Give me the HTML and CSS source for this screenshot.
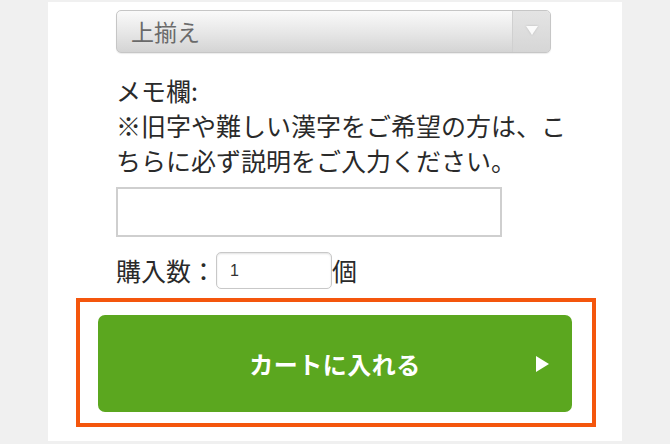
FILE: index.html
```html
<!DOCTYPE html>
<html lang="ja">
<head>
<meta charset="utf-8">
<title>カートに入れる</title>
<link rel="stylesheet" href="styles.css">
</head>
<body>
<div class="panel">
  <div class="form">
    <div class="select">
      <span class="select-text">上揃え</span>
      <span class="select-arrow">
        <svg width="12" height="9" viewBox="0 0 12 9"><polygon points="0,0 12,0 6,9" fill="#fbfbfb"/></svg>
      </span>
    </div>
    <p class="memo">メモ欄:<br>※旧字や難しい漢字をご希望の方は、こちらに必ず説明をご入力ください。</p>
    <div class="textarea"></div>
    <div class="qty">
      <span>購入数：</span><span class="qty-input">1</span><span>個</span>
    </div>
  </div>
  <div class="highlight">
    <div class="cart-btn">
      <span class="cart-label">カートに入れる</span>
      <svg class="cart-arrow" width="13" height="16" viewBox="0 0 13 16"><polygon points="0,0 13,8 0,16" fill="#ffffff"/></svg>
    </div>
  </div>
</div>
</body>
</html>
```

FILE: styles.css
```css
html, body {
  margin: 0;
  padding: 0;
}
body {
  background: #f0f0f0;
  font-family: "Noto Sans CJK JP", "Noto Sans", sans-serif;
  color: #2a2a2a;
  width: 670px;
  height: 444px;
  overflow: hidden;
}
.panel {
  margin: 2px 48px 0;
  background: #ffffff;
  height: 439px;
  padding-top: 8px;
  box-sizing: border-box;
}
.form {
  padding-left: 68px;
}
.select {
  width: 435px;
  height: 43px;
  box-sizing: border-box;
  border: 1px solid #c6c6c6;
  border-radius: 5px;
  background: linear-gradient(#fafafa, #e6e6e6 55%, #d4d4d4);
  display: flex;
  align-items: center;
  box-shadow: 0 1px 1px rgba(0,0,0,0.08);
}
.select-text {
  flex: 1;
  padding-left: 14px;
  font-size: 23px;
  color: #6a6a6a;
  line-height: 1;
}
.select-arrow {
  width: 37px;
  height: 100%;
  border-left: 1px solid #d0d0d0;
  background: linear-gradient(#e4e4e4, #d6d6d6);
  border-radius: 0 4px 4px 0;
  display: flex;
  align-items: center;
  justify-content: center;
}
.select-arrow svg {
  filter: drop-shadow(0 0 1px rgba(0,0,0,0.15));
  margin-top: -2px;
}
.memo {
  margin: 20px 0 0;
  width: 470px;
  font-size: 25px;
  line-height: 35px;
  color: #2a2a2a;
}
.textarea {
  margin-top: 9px;
  width: 386px;
  height: 50px;
  box-sizing: border-box;
  border: 2px solid #cfcfcf;
}
.qty {
  margin-top: 15px;
  display: flex;
  align-items: center;
  font-size: 25px;
  line-height: 37px;
  height: 37px;
}
.qty-input {
  width: 116px;
  height: 37px;
  box-sizing: border-box;
  border: 1px solid #c8c8c8;
  border-radius: 5px;
  box-shadow: inset 0 1px 2px rgba(0,0,0,0.12);
  font-family: "Liberation Sans", sans-serif;
  font-size: 16px;
  line-height: 35px;
  padding-left: 13px;
  color: #333;
}
.highlight {
  margin: 9px 0 0 28px;
  width: 520px;
  height: 129px;
  box-sizing: border-box;
  border: 4px solid #f4560d;
  padding: 13px 0 0 18px;
}
.cart-btn {
  width: 474px;
  height: 97px;
  background: #5ba71f;
  border-radius: 7px;
  display: flex;
  align-items: center;
  justify-content: center;
  position: relative;
}
.cart-label {
  color: #ffffff;
  font-size: 24px;
  font-weight: bold;
  letter-spacing: 0.5px;
}
.cart-arrow {
  position: absolute;
  right: 23px;
  top: 41px;
}
```
